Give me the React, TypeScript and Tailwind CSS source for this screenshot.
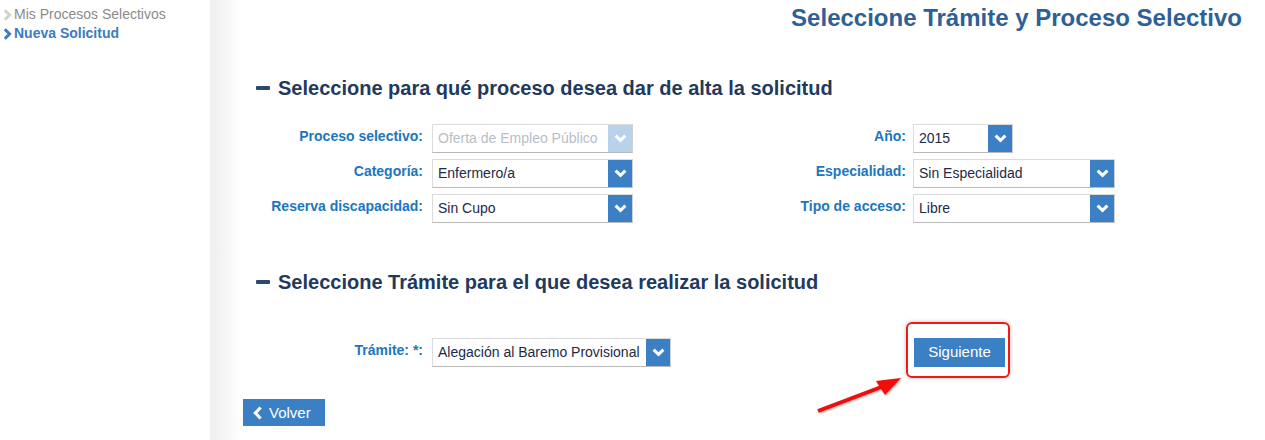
import React from 'react'

function ChevronDown() {
  return (
    <svg width="13" height="9" viewBox="0 0 13 9" fill="none">
      <path d="M1.6 1.6 L6.5 6.4 L11.4 1.6" stroke="white" strokeWidth="3" strokeLinejoin="miter" />
    </svg>
  )
}

function ChevronRight({ color }: { color: string }) {
  return (
    <svg width="9" height="12" viewBox="0 0 9 12" fill="none">
      <path d="M1.8 1.2 L6.6 6 L1.8 10.8" stroke={color} strokeWidth="3" />
    </svg>
  )
}

interface SelectProps {
  value: string
  width: string
  disabled?: boolean
}

function Select({ value, width, disabled }: SelectProps) {
  return (
    <div
      className={`flex h-[29px] ${width} items-stretch border border-[#dcdcdc] border-b-[#b9b9b9] border-r-[#d0d0d0] bg-white`}
    >
      <div
        className={`flex flex-1 items-center truncate pl-[5px] text-[14px] ${
          disabled ? 'text-[#b7bec8]' : 'text-[#1d2a48]'
        }`}
      >
        {value}
      </div>
      <div
        className={`flex w-[24px] items-center justify-center ${disabled ? 'bg-[#b9d1eb]' : 'bg-[#3b7fc4]'}`}
      >
        <ChevronDown />
      </div>
    </div>
  )
}

function Label({ text, width }: { text: string; width: string }) {
  return (
    <div className={`${width} pt-[4px] text-right text-[14px] leading-[16px] font-bold text-[#1b76bd]`}>
      {text}
    </div>
  )
}

function SectionTitle({ text }: { text: string }) {
  return (
    <div className="flex items-center pl-[13px] leading-[24px]">
      <span className="h-[4px] w-[14px] rounded-[1px] bg-[#2a4a72]" />
      <h2 className="ml-[8px] text-[20px] font-bold text-[#1f3a5d]">{text}</h2>
    </div>
  )
}

const rows = [
  {
    left: { label: 'Proceso selectivo:', value: 'Oferta de Empleo Público', disabled: true },
    right: { label: 'Año:', value: '2015', width: 'w-[100px]' },
  },
  {
    left: { label: 'Categoría:', value: 'Enfermero/a' },
    right: { label: 'Especialidad:', value: 'Sin Especialidad', width: 'w-[202px]' },
  },
  {
    left: { label: 'Reserva discapacidad:', value: 'Sin Cupo' },
    right: { label: 'Tipo de acceso:', value: 'Libre', width: 'w-[202px]' },
  },
]

export default function App() {
  return (
    <div className="relative flex h-[440px] w-[1265px] overflow-hidden bg-white font-['Liberation_Sans',Arial,sans-serif]">
      {/* Sidebar */}
      <aside className="w-[210px] shrink-0 pl-[3px] pt-[6px]">
        <a className="flex items-center gap-[2px] text-[14px] leading-[17px] text-[#8a8a8a]">
          <ChevronRight color="#d2d2d2" />
          <span>Mis Procesos Selectivos</span>
        </a>
        <a className="mt-[2px] flex items-center gap-[2px] text-[14px] leading-[17px] font-bold text-[#3a7cc3]">
          <ChevronRight color="#3a7cc3" />
          <span>Nueva Solicitud</span>
        </a>
      </aside>

      {/* Main */}
      <main className="flex-1 bg-[linear-gradient(to_right,#eeeeee,#ffffff_32px)] pl-[33px] pr-[23px]">
        <h1 className="pt-[5px] text-right text-[24px] leading-[26px] font-bold text-[#2e5f97]">
          Seleccione Trámite y Proceso Selectivo
        </h1>

        <div className="mt-[45px]">
          <SectionTitle text="Seleccione para qué proceso desea dar de alta la solicitud" />
        </div>

        <div className="mt-[24px] flex flex-col gap-[6px]">
          {rows.map((r) => (
            <div key={r.left.label} className="flex items-start">
              <Label text={r.left.label} width="w-[180px]" />
              <div className="ml-[9px]">
                <Select value={r.left.value} width="w-[201px]" disabled={r.left.disabled} />
              </div>
              <Label text={r.right.label} width="w-[273px]" />
              <div className="ml-[7px]">
                <Select value={r.right.value} width={r.right.width} />
              </div>
            </div>
          ))}
        </div>

        <div className="mt-[47px]">
          <SectionTitle text="Seleccione Trámite para el que desea realizar la solicitud" />
        </div>

        <div className="mt-[44px] flex items-start">
          <Label text="Trámite: *:" width="w-[180px]" />
          <div className="ml-[9px]">
            <Select value="Alegación al Baremo Provisional" width="w-[239px]" />
          </div>
          <div className="relative ml-[243px]">
            <button className="h-[29px] w-[91px] bg-[#3b7fc4] text-[15px] text-white">Siguiente</button>
            {/* annotation box */}
            <div className="pointer-events-none absolute -left-[8px] -top-[16px] h-[56px] w-[104px] rounded-[6px] border-2 border-[#f21818] shadow-[0_0_4px_rgba(0,0,0,0.25)]" />
          </div>
        </div>

        <button className="mt-[32px] flex h-[27px] w-[82px] items-center bg-[#3b7fc4] pl-[10px] pt-[2px] text-[15px] text-white">
          <svg width="10" height="14" viewBox="0 0 10 14" fill="none" className="-mt-[2px]">
            <path d="M7.6 1.5 L2.4 7 L7.6 12.5" stroke="white" strokeWidth="3.2" />
          </svg>
          <span className="ml-[6px]">Volver</span>
        </button>
      </main>

      {/* annotation arrow */}
      <svg
        className="pointer-events-none absolute left-[810px] top-[370px] drop-shadow-[1px_1px_1px_rgba(0,0,0,0.35)]"
        width="100"
        height="50"
        viewBox="0 0 100 50"
      >
        <line x1="8" y1="41" x2="74" y2="16" stroke="#f20c0c" strokeWidth="4" />
        <polygon points="91,8 66,11 75,25" fill="#f20c0c" />
      </svg>
    </div>
  )
}
